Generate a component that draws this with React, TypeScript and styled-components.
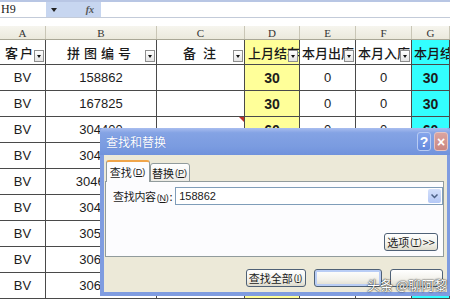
import styled, { createGlobalStyle } from "styled-components";

const GlobalStyle = createGlobalStyle`
  html, body {
    margin: 0;
    padding: 0;
    background: #ffffff;
  }
  body {
    width: 450px;
    height: 300px;
    overflow: hidden;
    font-family: "Liberation Sans", Arial, "Noto Sans CJK SC", sans-serif;
  }
`;

const COLS = "46px 111px 88px 55px 56px 56px 38px";
const CJK = `"Noto Sans CJK SC", "Noto Sans CJK TC", sans-serif`;

const Page = styled.div`
  position: relative;
  width: 450px;
  height: 300px;
  overflow: hidden;
  display: flex;
  flex-direction: column;
`;

// ---- formula bar ----
const TopStrip = styled.div`
  height: 2px;
  background: #b8c6e4;
`;
const FormulaBar = styled.div`
  display: flex;
  height: 15px;
  border-bottom: 1px solid #c3cbd9;
`;
const NameBox = styled.div`
  width: 45px;
  display: flex;
  align-items: center;
  padding-left: 1px;
  font: 12px "Liberation Serif", serif;
  color: #222;
  background: #fff;
`;
const FxArea = styled.div`
  width: 55px;
  display: flex;
  align-items: center;
  justify-content: space-between;
  padding: 0 7px 0 5px;
  box-sizing: border-box;
  background: #c7d6f0;
`;
const TinyArrow = styled.span`
  width: 0;
  height: 0;
  border-left: 3px solid transparent;
  border-right: 3px solid transparent;
  border-top: 4px solid #222;
`;
const Fx = styled.span`
  font: italic bold 10px "Liberation Serif", serif;
  color: #555;
`;
const Formula = styled.div`
  flex: 1;
  background: #fff;
`;
const Gap = styled.div`
  height: 8px;
`;

// ---- sheet ----
const Letters = styled.div`
  display: grid;
  grid-template-columns: ${COLS};
  height: 14px;
  background: linear-gradient(#f6f5ee, #ebe9dc);
  border-bottom: 1px solid #a9a796;
  box-sizing: border-box;
`;
const Letter = styled.div`
  display: flex;
  align-items: center;
  justify-content: center;
  border-right: 1px solid #c9c6b6;
  font: 11px "Liberation Serif", serif;
  color: #333;
`;

const Row = styled.div<{ $h: number }>`
  display: grid;
  grid-template-columns: ${COLS};
  height: ${(p) => p.$h}px;
  flex-shrink: 0;
`;
const Cell = styled.div<{ $bg?: string; $bold?: boolean; $left?: number }>`
  position: relative;
  display: flex;
  align-items: center;
  justify-content: ${(p) => (p.$left !== undefined ? "flex-start" : "center")};
  padding-left: ${(p) => p.$left ?? 0}px;
  overflow: hidden;
  white-space: nowrap;
  box-sizing: border-box;
  border-right: 1px solid #4a4a4a;
  border-bottom: 1px solid #4a4a4a;
  background: ${(p) => p.$bg || "#fff"};
  font-size: ${(p) => (p.$bold ? "14px" : "13px")};
  font-weight: ${(p) => (p.$bold ? 700 : 400)};
  color: #1c1c1c;
`;
const HeadText = styled.span<{ $sp?: number }>`
  font: 500 13px ${CJK};
  letter-spacing: ${(p) => p.$sp ?? 1}px;
  color: #1a1a1a;
`;
const FilterBtn = styled.span`
  position: absolute;
  right: 1px;
  bottom: 2px;
  width: 10px;
  height: 12px;
  box-sizing: border-box;
  border: 1px solid #8e8e8e;
  background: linear-gradient(#ffffff, #e4e4e4);
  display: flex;
  align-items: flex-end;
  justify-content: center;
  padding-bottom: 3px;
  &::after {
    content: "";
    border-left: 2px solid transparent;
    border-right: 2px solid transparent;
    border-top: 3px solid #111;
  }
`;
const CommentMark = styled.span`
  position: absolute;
  top: 0;
  right: 0;
  width: 0;
  height: 0;
  border-left: 5px solid transparent;
  border-top: 5px solid #c0302a;
`;

// ---- dialog ----
const Dialog = styled.div`
  position: absolute;
  left: 100px;
  top: 128px;
  width: 350px;
  height: 168px;
  box-sizing: border-box;
  border: 4px solid #7f9ce0;
  border-top: none;
  border-right-width: 3px;
  background: #ece9d8;
  display: flex;
  flex-direction: column;
  font: 11px ${CJK};
  color: #1a1a1a;
`;
const TitleBar = styled.div`
  height: 27px;
  margin: 0 -3px 0 -4px;
  display: flex;
  align-items: center;
  justify-content: space-between;
  padding: 0 2px 0 6px;
  background: linear-gradient(#a9bdef 0%, #84a3e4 18%, #7a9be0 70%, #7092dc 100%);
  border-radius: 4px 4px 0 0;
`;
const Title = styled.span`
  color: #fff;
  font: 12px ${CJK};
  text-shadow: 0 0 1px #4a6cc0;
`;
const TitleBtns = styled.div`
  display: flex;
  gap: 3px;
`;
const CapBtn = styled.span<{ $red?: boolean }>`
  width: 14px;
  height: 19px;
  box-sizing: border-box;
  border: 1px solid ${(p) => (p.$red ? "#e6c3c0" : "#b8cbf3")};
  border-radius: 3px;
  background: ${(p) =>
    p.$red ? "linear-gradient(#dba4a0, #c98681)" : "linear-gradient(#86a6ec, #6489dd)"};
  color: #fff;
  display: flex;
  align-items: center;
  justify-content: center;
  font: bold 14px "Liberation Sans", Arial, sans-serif;
`;

// mnemonic like (D), drawn smaller than the label
const Key = styled.span`
  font: 9px "Liberation Sans", Arial, sans-serif;
  margin: 0 1px;
`;

const Body = styled.div`
  flex: 1;
  display: flex;
  flex-direction: column;
  padding: 5px 3px 0 1px;
`;
const Tabs = styled.div`
  display: flex;
  align-items: flex-end;
  padding-left: 1px;
  margin-bottom: -1px;
  position: relative;
  z-index: 1;
`;
const Tab = styled.div<{ $active?: boolean }>`
  height: ${(p) => (p.$active ? 22 : 19)}px;
  width: ${(p) => (p.$active ? 44 : 40)}px;
  box-sizing: border-box;
  display: flex;
  align-items: center;
  justify-content: center;
  border: 1px solid #919b9c;
  border-bottom: ${(p) => (p.$active ? "none" : "1px solid #919b9c")};
  border-top: ${(p) => (p.$active ? "2px solid #f0a54a" : "1px solid #919b9c")};
  border-radius: 3px 3px 0 0;
  background: ${(p) => (p.$active ? "#fcfcfe" : "linear-gradient(#ffffff, #ecebe5)")};
  white-space: nowrap;
`;
const Panel = styled.div`
  height: 76px;
  box-sizing: border-box;
  border: 1px solid #919b9c;
  background: #fcfcfe;
  display: flex;
  flex-direction: column;
  justify-content: space-between;
  padding: 5px 0 5px 7px;
`;
const FieldRow = styled.div`
  display: flex;
  align-items: center;
  gap: 3px;
`;
const FieldLabel = styled.span`
  flex: none;
  white-space: nowrap;
  letter-spacing: -0.3px;
`;
const Combo = styled.div`
  flex: 1;
  height: 18px;
  box-sizing: border-box;
  border: 1px solid #7f9db9;
  background: #fff;
  display: flex;
  align-items: center;
  justify-content: space-between;
  padding: 0 1px 0 3px;
  font: 11px "Liberation Sans", Arial, sans-serif;
`;
const ComboBtn = styled.span`
  width: 13px;
  height: 14px;
  border-radius: 2px;
  background: linear-gradient(#d4e0fb, #b4c8f6);
  display: flex;
  align-items: center;
  justify-content: center;
`;
const OptRow = styled.div`
  display: flex;
  justify-content: flex-end;
  padding-right: 5px;
`;
const Btn = styled.div<{ $w: number; $focus?: boolean }>`
  width: ${(p) => p.$w}px;
  height: 18px;
  box-sizing: border-box;
  border: 1px solid #4f6176;
  border-radius: 3px;
  background: linear-gradient(#ffffff, #f2f1ea 60%, #dedbcd);
  box-shadow: ${(p) => (p.$focus ? "inset 0 0 0 2px #b9cdf5" : "none")};
  display: flex;
  align-items: center;
  justify-content: center;
  white-space: nowrap;
`;
const BtnRow = styled.div`
  display: flex;
  justify-content: flex-end;
  gap: 8px;
  margin-top: 12px;
  padding-right: 1px;
`;
const Watermark = styled.div`
  position: absolute;
  left: 367px;
  top: 275px;
  font: 13px ${CJK};
  color: #ffffff;
  text-shadow: 0 0 2px #333, 0 0 1px #000;
  white-space: nowrap;
`;

type RowData = { a: string; b: string; d: string; e: string; f: string; g: string; mark?: boolean };

const rows: RowData[] = [
  { a: "BV", b: "158862", d: "30", e: "0", f: "0", g: "30" },
  { a: "BV", b: "167825", d: "30", e: "0", f: "0", g: "30" },
  { a: "BV", b: "304400", d: "60", e: "0", f: "0", g: "60", mark: true },
  { a: "BV", b: "304521", d: "30", e: "0", f: "0", g: "30" },
  { a: "BV", b: "3046012", d: "30", e: "0", f: "0", g: "30" },
  { a: "BV", b: "304713", d: "30", e: "0", f: "0", g: "30" },
  { a: "BV", b: "305108", d: "30", e: "0", f: "0", g: "30" },
  { a: "BV", b: "306015", d: "30", e: "0", f: "0", g: "30" },
  { a: "BV", b: "306230", d: "30", e: "0", f: "0", g: "30" },
];

const YELLOW = "#ffff99";
const CYAN = "#33ffff";

export default function App() {
  return (
    <Page>
      <GlobalStyle />
      <TopStrip />
      <FormulaBar>
        <NameBox>H9</NameBox>
        <FxArea>
          <TinyArrow />
          <Fx>fx</Fx>
        </FxArea>
        <Formula />
      </FormulaBar>
      <Gap />

      <Letters>
        {["A", "B", "C", "D", "E", "F", "G"].map((l) => (
          <Letter key={l}>{l}</Letter>
        ))}
      </Letters>

      <Row $h={25}>
        <Cell $left={5}>
          <HeadText $sp={2}>客户</HeadText>
          <FilterBtn />
        </Cell>
        <Cell>
          <HeadText $sp={4}>拼图编号</HeadText>
          <FilterBtn />
        </Cell>
        <Cell>
          <HeadText $sp={2}>备 注</HeadText>
          <FilterBtn />
        </Cell>
        <Cell $bg={YELLOW} $left={3}>
          <HeadText $sp={0}>上月结存</HeadText>
          <FilterBtn />
        </Cell>
        <Cell $left={2}>
          <HeadText $sp={0}>本月出库</HeadText>
          <FilterBtn />
        </Cell>
        <Cell $left={2}>
          <HeadText $sp={0}>本月入库</HeadText>
          <FilterBtn />
        </Cell>
        <Cell $bg={CYAN} $left={2}>
          <HeadText $sp={0}>本月结存</HeadText>
        </Cell>
      </Row>

      {rows.map((r, i) => (
        <Row $h={26} key={i}>
          <Cell>{r.a}</Cell>
          <Cell>{r.b}</Cell>
          <Cell>{r.mark && <CommentMark />}</Cell>
          <Cell $bg={YELLOW} $bold>
            {r.d}
          </Cell>
          <Cell>{r.e}</Cell>
          <Cell>{r.f}</Cell>
          <Cell $bg={CYAN} $bold>
            {r.g}
          </Cell>
        </Row>
      ))}

      <Dialog>
        <TitleBar>
          <Title>查找和替换</Title>
          <TitleBtns>
            <CapBtn>?</CapBtn>
            <CapBtn $red>×</CapBtn>
          </TitleBtns>
        </TitleBar>
        <Body>
          <Tabs>
            <Tab $active>
              查找<Key>(<u>D</u>)</Key>
            </Tab>
            <Tab>
              替换<Key>(<u>P</u>)</Key>
            </Tab>
          </Tabs>
          <Panel>
            <FieldRow>
              <FieldLabel>
                查找内容<Key>(<u>N</u>)</Key>:
              </FieldLabel>
              <Combo>
                158862
                <ComboBtn>
                  <svg width="7" height="5" viewBox="0 0 7 5">
                    <path d="M0.5 0.5 L3.5 3.5 L6.5 0.5" fill="none" stroke="#4d6185" strokeWidth="1.5" />
                  </svg>
                </ComboBtn>
              </Combo>
            </FieldRow>
            <OptRow>
              <Btn $w={54}>
                选项<Key>(<u>T</u>)</Key> &gt;&gt;
              </Btn>
            </OptRow>
          </Panel>
          <BtnRow>
            <Btn $w={60}>
              查找全部<Key>(<u>I</u>)</Key>
            </Btn>
            <Btn $w={68} $focus />
            <Btn $w={53} />
          </BtnRow>
        </Body>
      </Dialog>

      <Watermark>头条 @聊阿黎</Watermark>
    </Page>
  );
}
